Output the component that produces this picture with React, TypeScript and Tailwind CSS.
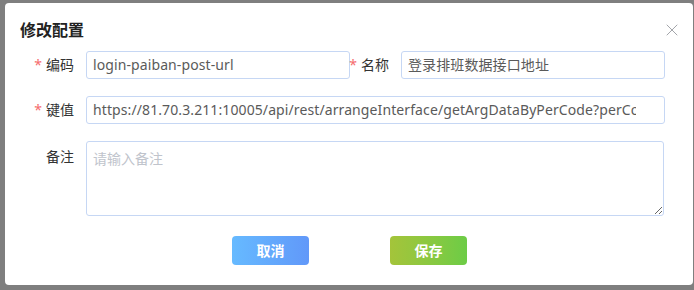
import { X } from 'lucide-react';

const font = { fontFamily: '"Noto Sans", "Noto Sans CJK SC", sans-serif' };

function Label({ text, required, className = '' }: { text: string; required?: boolean; className?: string }) {
  return (
    <div className={`flex shrink-0 items-center justify-end whitespace-nowrap pr-3 text-sm text-[#333] ${className}`}>
      {required && <span className="mr-1 text-[#f56c6c]">*</span>}
      {text}
    </div>
  );
}

function Field({ value, className = '' }: { value: string; className?: string }) {
  return (
    <div
      className={`flex h-7 shrink-0 items-center overflow-hidden whitespace-nowrap rounded-[3px] border border-[#c6d7f4] pl-[6px] text-sm tracking-[0.1px] text-[#5a5a5a] ${className}`}
    >
      <span className="overflow-hidden">{value}</span>
    </div>
  );
}

export default function App() {
  return (
    <div className="h-[290px] w-[694px] bg-[#7f7f7f] pl-[5px] pt-[3px]" style={font}>
      {/* dialog */}
      <div className="h-[282px] w-[688px] rounded-[4px] bg-white pr-[29px] pl-5">
        <div className="flex items-center justify-between pt-[17px]">
          <h2 className="-ml-[5px] text-base font-bold leading-5 text-[#222]">修改配置</h2>
          <X className="-mr-[18px] h-5 w-5 text-[#909399]" strokeWidth={1} />
        </div>

        <div className="mt-[11px] flex flex-col gap-[17px]">
          <div className="flex">
            <Label text="编码" required className="w-[61px]" />
            <Field value="login-paiban-post-url" className="w-[264px] pr-[6px]" />
            <Label text="名称" required className="w-[51px]" />
            <Field value="登录排班数据接口地址" className="w-[264px] pr-[6px]" />
          </div>

          <div className="flex">
            <Label text="键值" required className="w-[61px]" />
            <Field
              value="https://81.70.3.211:10005/api/rest/arrangeInterface/getArgDataByPerCode?perCode"
              className="w-[579px] pr-[28px]"
            />
          </div>

          <div className="flex">
            <Label text="备注" className="w-[61px] items-start pt-[6px]" />
            <textarea
              readOnly
              placeholder="请输入备注"
              className="h-[75px] w-[579px] rounded-[3px] border border-[#c6d7f4] px-[6px] pt-[5px] text-sm leading-6 text-[#555] outline-none placeholder:text-[#c0c4cc]"
            />
          </div>
        </div>

        <div className="mt-[20px] flex gap-[81px] pl-[207px]">
          <button className="h-[29px] w-[77px] rounded-[4px] bg-gradient-to-r from-[#66baff] to-[#6198f9] text-sm font-bold text-white">
            取消
          </button>
          <button className="h-[29px] w-[77px] rounded-[4px] bg-gradient-to-r from-[#a4c43a] to-[#6ccc46] text-sm font-bold text-white">
            保存
          </button>
        </div>
      </div>
    </div>
  );
}
